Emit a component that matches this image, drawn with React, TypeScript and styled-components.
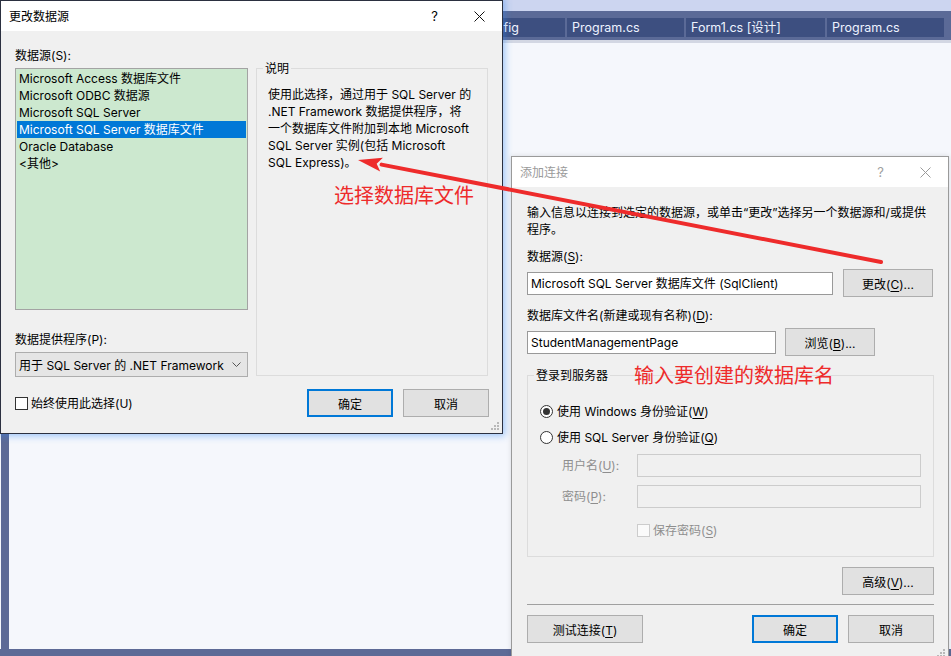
import React from "react";
import styled, { createGlobalStyle } from "styled-components";

const FONT = `Inter, "Noto Sans CJK SC", sans-serif`;

const Global = createGlobalStyle`
  html, body { margin: 0; padding: 0; }
  body { font-family: ${FONT}; font-size: 12px; color: #000; background: #f5f7fc; }
  * { box-sizing: border-box; }
`;

/* ---------- IDE background ---------- */
const Screen = styled.div`
  position: relative;
  width: 951px;
  height: 656px;
  overflow: hidden;
  display: flex;
  flex-direction: column;
  background: #f5f7fc;
`;
const TopStrip = styled.div`
  flex: none;
  height: 11px;
  background: #ccd5f0;
`;
const TabBar = styled.div`
  flex: none;
  height: 29px;
  background: #5b6a97;
  display: flex;
  align-items: flex-start;
  gap: 2px;
  padding: 7px 0 0 449px;
`;
const Tab = styled.div<{ $w: number }>`
  flex: none;
  width: ${(p) => p.$w}px;
  height: 19px;
  background: #3d4f80;
  color: #eef3ff;
  font-size: 12.5px;
  line-height: 19px;
  padding-left: 5px;
  white-space: nowrap;
  overflow: hidden;
`;
const TabRule = styled.div`
  flex: none;
  height: 3px;
  background: #d3d7e3;
`;
const Workspace = styled.div`
  flex: 1;
  display: flex;
`;
const Rail = styled.div`
  flex: none;
  width: 8px;
  margin-left: 1px;
  background: #5d6a96;
`;
const Editor = styled.div`
  flex: 1;
  background: #f5f7fc;
`;
const StatusEdge = styled.div`
  flex: none;
  height: 7px;
  background: #5d6a96;
`;

/* ---------- windows ---------- */
const Window = styled.div<{ $x: number; $y: number; $w: number; $h: number; $active?: boolean }>`
  position: absolute;
  left: ${(p) => p.$x}px;
  top: ${(p) => p.$y}px;
  width: ${(p) => p.$w}px;
  height: ${(p) => p.$h}px;
  display: flex;
  flex-direction: column;
  background: #f0f0f0;
  border: 1px solid ${(p) => (p.$active ? "#2b3040" : "#9a9a9a")};
  box-shadow: ${(p) =>
    p.$active ? "0 0 7px 2px rgba(50, 135, 245, 0.45)" : "0 0 5px rgba(0,0,0,0.12)"};
`;
const TitleBar = styled.div`
  flex: none;
  height: 30px;
  background: #fff;
  display: flex;
  align-items: center;
`;
const Title = styled.div<{ $active?: boolean }>`
  flex: 1;
  padding: 0 0 2px 8px;
  color: ${(p) => (p.$active ? "#000" : "#9a9a9a")};
  font-size: 12px;
`;
const Caption = styled.div<{ $active?: boolean }>`
  flex: none;
  width: 45px;
  height: 30px;
  display: flex;
  align-items: center;
  justify-content: center;
  font-size: 13px;
  color: ${(p) => (p.$active ? "#000" : "#a0a0a0")};
`;
const Body = styled.div<{ $pt: number; $pl: number; $pr: number }>`
  flex: 1;
  display: flex;
  flex-direction: column;
  padding: ${(p) => `${p.$pt}px ${p.$pr}px 0 ${p.$pl}px`};
`;
const Gripper = styled.svg`
  position: absolute;
  right: 2px;
  bottom: 2px;
`;

/* ---------- controls ---------- */
const Label = styled.div<{ $mt?: number; $dim?: boolean }>`
  line-height: 17px;
  margin-top: ${(p) => p.$mt ?? 0}px;
  margin-bottom: 4px;
  white-space: nowrap;
  color: ${(p) => (p.$dim ? "#8e8e8e" : "#000")};
`;
const Mn = styled.span`
  text-decoration: underline;
  text-underline-offset: 2px;
`;
const Columns = styled.div`
  display: flex;
  gap: 8px;
`;
const Column = styled.div<{ $w: number; $pt?: number }>`
  flex: none;
  width: ${(p) => p.$w}px;
  padding-top: ${(p) => p.$pt ?? 0}px;
  display: flex;
  flex-direction: column;
`;
const ListBox = styled.div`
  height: 242px;
  border: 1px solid #a3a3a3;
  background: #cce8cf;
  padding: 1px;
`;
const ListItem = styled.div<{ $selected?: boolean }>`
  line-height: 17px;
  padding-left: 2px;
  white-space: nowrap;
  background: ${(p) => (p.$selected ? "#0078d7" : "transparent")};
  color: ${(p) => (p.$selected ? "#fff" : "#000")};
`;
const Combo = styled.div`
  height: 25px;
  border: 1px solid #adadad;
  background: #e5e5e5;
  display: flex;
  align-items: center;
  justify-content: space-between;
  padding: 0 6px 0 3px;
  white-space: nowrap;
`;
const GroupBox = styled.div<{ $h: number; $mt?: number }>`
  height: ${(p) => p.$h}px;
  margin-top: ${(p) => p.$mt ?? 0}px;
  border: 1px solid #dcdcdc;
  display: flex;
  flex-direction: column;
`;
const GroupLabel = styled.div`
  align-self: flex-start;
  margin: -9px 0 0 6px;
  padding: 0 2px;
  line-height: 17px;
  background: #f0f0f0;
`;
const Description = styled.div`
  margin-top: 9px;
  padding: 0 6px 0 11px;
  line-height: 17px;
  white-space: pre-line;
`;
const FooterRow = styled.div`
  margin-top: 12px;
  height: 28px;
  display: flex;
  align-items: center;
  justify-content: space-between;
`;
const CheckRow = styled.label<{ $mt?: number }>`
  display: flex;
  align-items: center;
  gap: 3px;
  line-height: 17px;
  margin-top: ${(p) => p.$mt ?? 0}px;
  white-space: nowrap;
`;
const CheckBox = styled.span<{ $disabled?: boolean }>`
  flex: none;
  width: 13px;
  height: 13px;
  border: 1px solid ${(p) => (p.$disabled ? "#cccccc" : "#333")};
  background: ${(p) => (p.$disabled ? "#fafafa" : "#fff")};
`;
const DimText = styled.span`
  color: #8e8e8e;
`;
const ButtonRow = styled.div`
  display: flex;
  gap: 10px;
`;
const Button = styled.button<{ $w?: number; $default?: boolean }>`
  flex: none;
  width: ${(p) => p.$w ?? 86}px;
  height: 28px;
  padding: 0;
  font: inherit;
  font-size: 12px;
  color: #000;
  background: #e1e1e1;
  border: ${(p) => (p.$default ? "2px solid #0078d7" : "1px solid #adadad")};
  white-space: nowrap;
`;
const Para = styled.div`
  line-height: 17px;
  white-space: pre-line;
`;
const FieldRow = styled.div<{ $gap: number }>`
  height: 28px;
  display: flex;
  align-items: center;
  gap: ${(p) => p.$gap}px;
`;
const TextBox = styled.div<{ $w?: number; $disabled?: boolean }>`
  flex: none;
  width: ${(p) => (p.$w ? `${p.$w}px` : "auto")};
  height: 23px;
  border: 1px solid ${(p) => (p.$disabled ? "#cccccc" : "#999999")};
  background: ${(p) => (p.$disabled ? "#f0f0f0" : "#fff")};
  padding-left: 3px;
  line-height: 21px;
  white-space: nowrap;
`;
const RadioRow = styled.label<{ $mt: number }>`
  display: flex;
  align-items: center;
  gap: 4px;
  margin-top: ${(p) => p.$mt}px;
  padding-left: 12px;
  line-height: 17px;
  white-space: nowrap;
`;
const Radio = styled.span<{ $checked?: boolean }>`
  flex: none;
  width: 13px;
  height: 13px;
  border-radius: 50%;
  border: 1px solid #333;
  background: #fff;
  display: flex;
  align-items: center;
  justify-content: center;
  &::after {
    content: "";
    width: 7px;
    height: 7px;
    border-radius: 50%;
    background: ${(p) => (p.$checked ? "#333" : "transparent")};
  }
`;
const CredGrid = styled.div`
  margin: 8px 12px 0 34px;
  display: grid;
  grid-template-columns: 75px 1fr;
  row-gap: 8px;
  align-items: center;
`;
const RightRow = styled.div`
  margin-top: 10px;
  display: flex;
  justify-content: flex-end;
`;
const Separator = styled.div`
  margin-top: 9px;
  height: 1px;
  background: #a0a0a0;
`;
const ActionRow = styled.div`
  margin-top: 10px;
  display: flex;
  justify-content: space-between;
`;

/* ---------- annotations ---------- */
const Note = styled.div<{ $x: number; $y: number }>`
  position: absolute;
  left: ${(p) => p.$x}px;
  top: ${(p) => p.$y}px;
  color: #ee2b2b;
  font-family: "Noto Sans CJK SC", sans-serif;
  font-size: 20px;
  line-height: 24px;
  white-space: nowrap;
`;
const Overlay = styled.svg`
  position: absolute;
  left: 0;
  top: 0;
  pointer-events: none;
`;

const CloseIcon = ({ color }: { color: string }) => (
  <svg width="11" height="11" viewBox="0 0 11 11">
    <path d="M0.5 0.5 L10.5 10.5 M10.5 0.5 L0.5 10.5" stroke={color} strokeWidth="1" fill="none" />
  </svg>
);

const Chevron = () => (
  <svg width="9" height="6" viewBox="0 0 9 6">
    <path d="M0.5 0.5 L4.5 4.5 L8.5 0.5" stroke="#555" strokeWidth="1" fill="none" />
  </svg>
);

const GripDots = () => (
  <Gripper width="9" height="9" viewBox="0 0 9 9">
    {[
      [6, 0],
      [3, 3],
      [6, 3],
      [0, 6],
      [3, 6],
      [6, 6],
    ].map(([x, y]) => (
      <rect key={`${x}-${y}`} x={x} y={y} width="2" height="2" fill="#b8b8b8" />
    ))}
  </Gripper>
);

const sources = [
  "Microsoft Access 数据库文件",
  "Microsoft ODBC 数据源",
  "Microsoft SQL Server",
  "Microsoft SQL Server 数据库文件",
  "Oracle Database",
  "<其他>",
];

export default function App() {
  // arrow geometry
  const tail = { x: 881, y: 262 };
  const tip = { x: 358, y: 160 };
  const dx = tip.x - tail.x;
  const dy = tip.y - tail.y;
  const len = Math.hypot(dx, dy);
  const ux = dx / len;
  const uy = dy / len;
  const bx = tip.x - ux * 24;
  const by = tip.y - uy * 24;
  const nx = -uy;
  const ny = ux;
  const head = `${tip.x},${tip.y} ${bx + nx * 7},${by + ny * 7} ${bx + ux * 5},${by + uy * 5} ${bx - nx * 7},${by - ny * 7}`;

  return (
    <>
      <Global />
      <Screen>
        <TopStrip />
        <TabBar>
          <Tab $w={116}>App.config</Tab>
          <Tab $w={117}>Program.cs</Tab>
          <Tab $w={139}>Form1.cs [设计]</Tab>
          <Tab $w={117}>Program.cs</Tab>
        </TabBar>
        <TabRule />
        <Workspace>
          <Rail />
          <Editor />
        </Workspace>
        <StatusEdge />

        {/* 更改数据源 */}
        <Window $x={0} $y={0} $w={503} $h={434} $active>
          <TitleBar>
            <Title $active>更改数据源</Title>
            <Caption $active>?</Caption>
            <Caption $active>
              <CloseIcon color="#111" />
            </Caption>
          </TitleBar>
          <Body $pt={16} $pl={14} $pr={13}>
            <Columns>
              <Column $w={233}>
                <Label>数据源(S):</Label>
                <ListBox>
                  {sources.map((s, i) => (
                    <ListItem key={s} $selected={i === 3}>
                      {s}
                    </ListItem>
                  ))}
                </ListBox>
                <Label $mt={21}>数据提供程序(P):</Label>
                <Combo>
                  <span>用于 SQL Server 的 .NET Framework</span>
                  <Chevron />
                </Combo>
              </Column>
              <Column $w={232} $pt={21}>
                <GroupBox $h={308}>
                  <GroupLabel>说明</GroupLabel>
                  <Description>
                    {"使用此选择，通过用于 SQL Server 的\n.NET Framework 数据提供程序，将\n一个数据库文件附加到本地 Microsoft\nSQL Server 实例(包括 Microsoft\nSQL Express)。"}
                  </Description>
                </GroupBox>
              </Column>
            </Columns>
            <FooterRow>
              <CheckRow>
                <CheckBox />
                <span>始终使用此选择(U)</span>
              </CheckRow>
              <ButtonRow>
                <Button $default>确定</Button>
                <Button>取消</Button>
              </ButtonRow>
            </FooterRow>
          </Body>
          <GripDots />
        </Window>

        {/* 添加连接 */}
        <Window $x={511} $y={156} $w={438} $h={505}>
          <TitleBar>
            <Title>添加连接</Title>
            <Caption>?</Caption>
            <Caption>
              <CloseIcon color="#9a9a9a" />
            </Caption>
          </TitleBar>
          <Body $pt={17} $pl={15} $pr={14}>
            <Para>{"输入信息以连接到选定的数据源，或单击“更改”选择另一个数据源和/或提供\n程序。"}</Para>
            <Label $mt={10}>
              数据源(<Mn>S</Mn>):
            </Label>
            <FieldRow $gap={10}>
              <TextBox $w={306}>Microsoft SQL Server 数据库文件 (SqlClient)</TextBox>
              <Button $w={90}>
                更改(<Mn>C</Mn>)...
              </Button>
            </FieldRow>
            <Label $mt={10}>
              数据库文件名(新建或现有名称)(<Mn>D</Mn>):
            </Label>
            <FieldRow $gap={9}>
              <TextBox $w={249}>StudentManagementPage</TextBox>
              <Button $w={90}>
                浏览(<Mn>B</Mn>)...
              </Button>
            </FieldRow>
            <GroupBox $h={182} $mt={19}>
              <GroupLabel>登录到服务器</GroupLabel>
              <RadioRow $mt={19}>
                <Radio $checked />
                <span>
                  使用 Windows 身份验证(<Mn>W</Mn>)
                </span>
              </RadioRow>
              <RadioRow $mt={9}>
                <Radio />
                <span>
                  使用 SQL Server 身份验证(<Mn>Q</Mn>)
                </span>
              </RadioRow>
              <CredGrid>
                <Label $dim style={{ marginBottom: 0 }}>
                  用户名(<Mn>U</Mn>):
                </Label>
                <TextBox $disabled />
                <Label $dim style={{ marginBottom: 0 }}>
                  密码(<Mn>P</Mn>):
                </Label>
                <TextBox $disabled />
                <span />
                <CheckRow $mt={6}>
                  <CheckBox $disabled />
                  <DimText>
                    保存密码(<Mn>S</Mn>)
                  </DimText>
                </CheckRow>
              </CredGrid>
            </GroupBox>
            <RightRow>
              <Button $w={92}>
                高级(<Mn>V</Mn>)...
              </Button>
            </RightRow>
            <Separator />
            <ActionRow>
              <Button $w={116}>
                测试连接(<Mn>T</Mn>)
              </Button>
              <ButtonRow>
                <Button $default>确定</Button>
                <Button>取消</Button>
              </ButtonRow>
            </ActionRow>
          </Body>
          <GripDots />
        </Window>

        <Note $x={334} $y={183}>选择数据库文件</Note>
        <Note $x={634} $y={363}>输入要创建的数据库名</Note>

        <Overlay width="951" height="656" viewBox="0 0 951 656">
          <line
            x1={tail.x}
            y1={tail.y}
            x2={bx}
            y2={by}
            stroke="#ee2b2b"
            strokeWidth="4"
            strokeLinecap="round"
          />
          <polygon points={head} fill="#ee2b2b" />
        </Overlay>
      </Screen>
    </>
  );
}
